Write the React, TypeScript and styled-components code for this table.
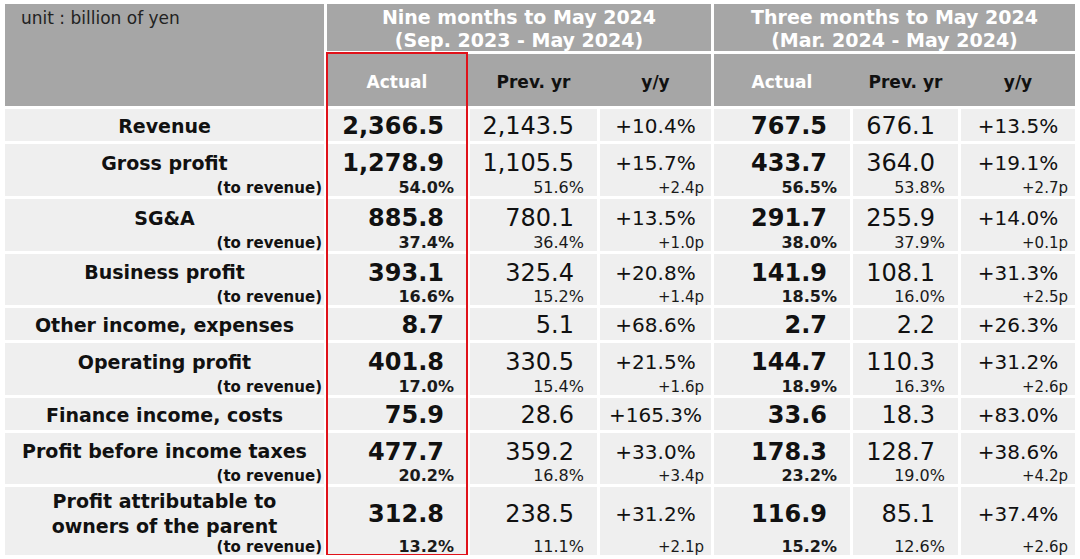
import React from 'react';
import styled, { createGlobalStyle } from 'styled-components';

const GlobalStyle = createGlobalStyle`
  html, body {
    margin: 0;
    padding: 0;
    background: #ffffff;
  }
  body {
    font-family: Verdana, "DejaVu Sans", sans-serif;
    color: #111111;
  }
`;

const HEAD_BG = '#a6a6a6';
const CELL_BG = '#efefef';

type Kind = 'actual' | 'prev' | 'yy';
const kinds: Kind[] = ['actual', 'prev', 'yy', 'actual', 'prev', 'yy'];

interface Row {
    label: string[];
    values: string[];
    ratio?: string[];
    h: number;
}

const rows: Row[] = [
    { label: ['Revenue'], values: ['2,366.5', '2,143.5', '+10.4%', '767.5', '676.1', '+13.5%'], h: 32 },
    {
        label: ['Gross profit'],
        values: ['1,278.9', '1,105.5', '+15.7%', '433.7', '364.0', '+19.1%'],
        ratio: ['54.0%', '51.6%', '+2.4p', '56.5%', '53.8%', '+2.7p'],
        h: 52,
    },
    {
        label: ['SG&A'],
        values: ['885.8', '780.1', '+13.5%', '291.7', '255.9', '+14.0%'],
        ratio: ['37.4%', '36.4%', '+1.0p', '38.0%', '37.9%', '+0.1p'],
        h: 52,
    },
    {
        label: ['Business profit'],
        values: ['393.1', '325.4', '+20.8%', '141.9', '108.1', '+31.3%'],
        ratio: ['16.6%', '15.2%', '+1.4p', '18.5%', '16.0%', '+2.5p'],
        h: 51,
    },
    { label: ['Other income, expenses'], values: ['8.7', '5.1', '+68.6%', '2.7', '2.2', '+26.3%'], h: 32 },
    {
        label: ['Operating profit'],
        values: ['401.8', '330.5', '+21.5%', '144.7', '110.3', '+31.2%'],
        ratio: ['17.0%', '15.4%', '+1.6p', '18.9%', '16.3%', '+2.6p'],
        h: 52,
    },
    { label: ['Finance income, costs'], values: ['75.9', '28.6', '+165.3%', '33.6', '18.3', '+83.0%'], h: 32 },
    {
        label: ['Profit before income taxes'],
        values: ['477.7', '359.2', '+33.0%', '178.3', '128.7', '+38.6%'],
        ratio: ['20.2%', '16.8%', '+3.4p', '23.2%', '19.0%', '+4.2p'],
        h: 51,
    },
    {
        label: ['Profit attributable to', 'owners of the parent'],
        values: ['312.8', '238.5', '+31.2%', '116.9', '85.1', '+37.4%'],
        ratio: ['13.2%', '11.1%', '+2.1p', '15.2%', '12.6%', '+2.6p'],
        h: 68,
    },
];

const Page = styled.div`
    padding: 4px 5px 0 5px;
`;

const Table = styled.div<{ $rows: string }>`
    display: grid;
    grid-template-columns: 319px 140px 127px 111px 136px 105px 114px;
    grid-template-rows: 47px 52px ${p => p.$rows};
    gap: 3px;
    width: 1070px;
`;

const Corner = styled.div`
    grid-row: 1 / 3;
    grid-column: 1;
    background: ${HEAD_BG};
    padding: 2px 0 0 16px;
    font-size: 17px;
    line-height: 24px;
    color: #222222;
`;

const GroupTitle = styled.div<{ $c: string }>`
    grid-row: 1;
    grid-column: ${p => p.$c};
    background: ${HEAD_BG};
    color: #ffffff;
    font-size: 19px;
    font-weight: bold;
    line-height: 23px;
    padding-top: 2px;
    text-align: center;
`;

// one grey band behind the three sub headings of a group (no gaps inside)
const SubBand = styled.div<{ $c: string }>`
    grid-row: 2;
    grid-column: ${p => p.$c};
    background: ${HEAD_BG};
`;

const SubHead = styled.div<{ $c: number; $light?: boolean }>`
    grid-row: 2;
    grid-column: ${p => p.$c};
    display: flex;
    align-items: center;
    justify-content: center;
    padding-top: 3px;
    font-size: 17px;
    font-weight: bold;
    color: ${p => (p.$light ? '#ffffff' : '#111111')};
    z-index: 1;
`;

const RedFrame = styled.div`
    grid-row: 2 / -1;
    grid-column: 2;
    margin: -2px -1px -1px -1px;
    border: 2px solid #e0121a;
    z-index: 3;
    pointer-events: none;
`;

const LabelCell = styled.div<{ $r: number }>`
    grid-row: ${p => p.$r};
    grid-column: 1;
    background: ${CELL_BG};
    display: flex;
    flex-direction: column;
`;

const LabelMain = styled.div`
    flex: 1;
    display: flex;
    flex-direction: column;
    justify-content: center;
    padding-top: 2px;
    font-size: 19px;
    font-weight: bold;
    line-height: 25px;
    text-align: center;
`;

const LabelSub = styled.div`
    font-size: 15px;
    font-weight: bold;
    line-height: 16px;
    text-align: right;
    padding-right: 2px;
`;

const ValueCell = styled.div<{ $r: number; $c: number }>`
    grid-row: ${p => p.$r};
    grid-column: ${p => p.$c};
    background: ${CELL_BG};
    display: flex;
    flex-direction: column;
`;

const Num = styled.div<{ $kind: Kind }>`
    flex: 1;
    display: flex;
    align-items: center;
    justify-content: ${p => (p.$kind === 'yy' ? 'center' : 'flex-end')};
    padding: 2px ${p => (p.$kind === 'yy' ? '0' : '23px')} 0 0;
    font-size: ${p => (p.$kind === 'yy' ? '20px' : '24px')};
    font-weight: ${p => (p.$kind === 'actual' ? 'bold' : 'normal')};
    line-height: 28px;
    white-space: nowrap;
`;

const Ratio = styled.div<{ $kind: Kind }>`
    text-align: right;
    padding-right: ${p => (p.$kind === 'yy' ? '7px' : '13px')};
    font-size: ${p => (p.$kind === 'yy' ? '15px' : '16px')};
    font-weight: ${p => (p.$kind === 'actual' ? 'bold' : 'normal')};
    line-height: 16px;
    color: #1a1a1a;
`;

const App = () => {
    const rowSizes = rows.map(r => `${r.h}px`).join(' ');
    return (
        <Page>
            <GlobalStyle />
            <Table $rows={rowSizes}>
                <Corner>unit : billion of yen</Corner>
                <GroupTitle $c="2 / 5">
                    Nine months to May 2024
                    <br />
                    (Sep. 2023 - May 2024)
                </GroupTitle>
                <GroupTitle $c="5 / 8">
                    Three months to May 2024
                    <br />
                    (Mar. 2024 - May 2024)
                </GroupTitle>
                <SubBand $c="2 / 5" />
                <SubBand $c="5 / 8" />
                {kinds.map((k, i) => (
                    <SubHead key={i} $c={i + 2} $light={k === 'actual'}>
                        {k === 'actual' ? 'Actual' : k === 'prev' ? 'Prev. yr' : 'y/y'}
                    </SubHead>
                ))}
                {rows.map((row, ri) => {
                    const r = ri + 3;
                    return (
                        <React.Fragment key={ri}>
                            <LabelCell $r={r}>
                                <LabelMain>
                                    {row.label.map(l => (
                                        <span key={l}>{l}</span>
                                    ))}
                                </LabelMain>
                                {row.ratio && <LabelSub>(to revenue)</LabelSub>}
                            </LabelCell>
                            {row.values.map((v, ci) => (
                                <ValueCell key={ci} $r={r} $c={ci + 2}>
                                    <Num $kind={kinds[ci]}>{v}</Num>
                                    {row.ratio && <Ratio $kind={kinds[ci]}>{row.ratio[ci]}</Ratio>}
                                </ValueCell>
                            ))}
                        </React.Fragment>
                    );
                })}
                <RedFrame />
            </Table>
        </Page>
    );
};

export default App;
